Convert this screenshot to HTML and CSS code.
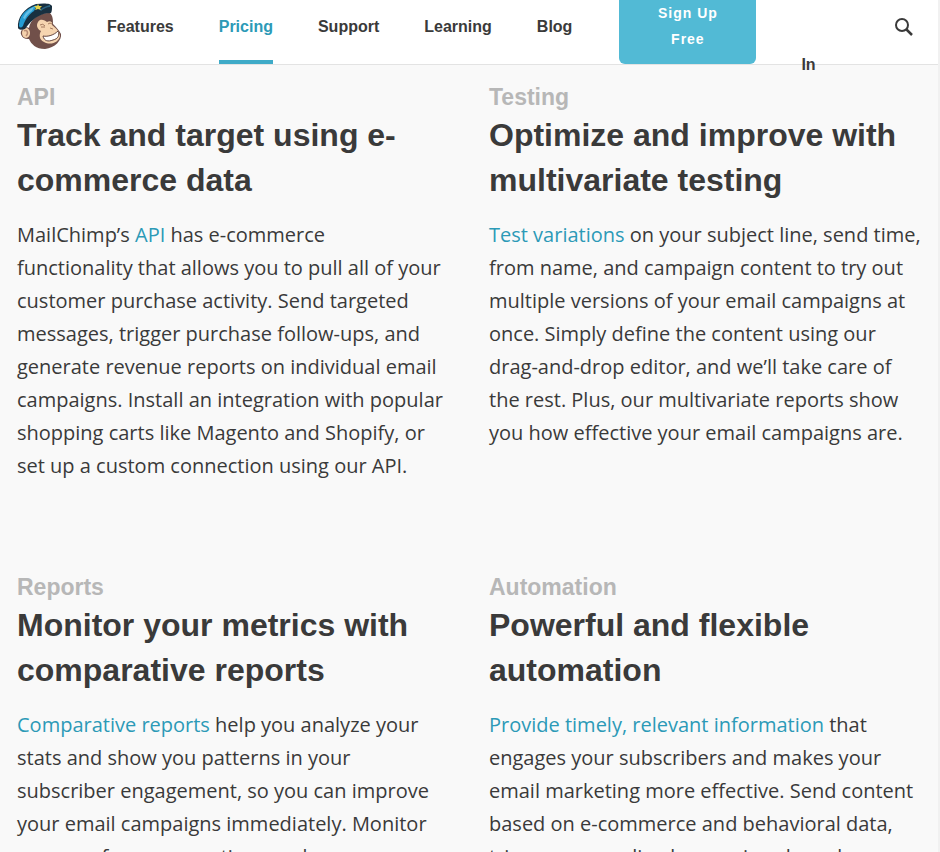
FILE: index.html
```html
<!DOCTYPE html>
<html lang="en">
<head>
  <meta charset="UTF-8">
  <meta name="viewport" content="width=device-width, initial-scale=1.0">
  <title>Pricing | MailChimp</title>
  <link rel="stylesheet" href="styles.css">
</head>
<body>
  <header class="site-header">
    <a href="#" class="logo" aria-label="MailChimp">
      <svg width="46" height="46" viewBox="0 0 46 46">
        <!-- head and ear -->
        <path d="M12 25C13 16 23 9 33 10C36 13 36 17 36 21C39 24 42 27 44 31C45 37 38 45 28 46C19 46 14 41 12 36C5 37 1 29 6 26C8 24 11 24 12 25Z" fill="#71504a"/>
        <ellipse cx="9" cy="30" rx="4" ry="5" fill="#f4d1ac"/>
        <path d="M7 28C10 26 12 30 9 33" fill="none" stroke="#b98c74" stroke-width="1.5"/>
        <!-- face -->
        <path d="M21 19C23 15 28 17 30 19C33 17 36 19 35 22C39 25 43 29 43 33C42 39 34 43 27 39C22 37 22 31 24 28C20 26 19 22 21 19Z" fill="#f6d5b0"/>
        <path d="M26 33C31 34 37 32 41 28C43 32 41 36 36 37C31 39 27 38 26 33Z" fill="#fff" stroke="#65463f"/>
        <path d="M23 22Q26 20 28 23M31 21Q33 19 35 21M24 24L28 24M33 25L36 26" fill="none" stroke="#a4795e"/>
        <!-- cap -->
        <path d="M1 25C0 15 7 5 19 1C26 0 34 0 35 3C35 6 35 8 34 10C23 10 15 16 8 26C4 27 2 27 1 25Z" fill="#183040"/>
        <path d="M2 23C2 13 8 6 20 2L17 8C11 12 8 17 6 23C4 25 3 25 2 23Z" fill="#259dd3"/>
        <path d="M6 15C8 10 12 6 17 4L15 8C11 11 9 13 8 16Z" fill="#65bfe5"/>
        <path d="M23 7C26 4 30 3 33 2L33 4C30 4 26 6 24 8Z" fill="#2c6684"/>
        <path d="M21 1L22 3L25 3L23 5L24 7L21 6L18 7L19 5L17 3L20 3Z" fill="#e5d249"/>
      </svg>
    </a>
    <nav class="main-nav">
      <a href="#">Features</a>
      <a href="#" class="active">Pricing</a>
      <a href="#">Support</a>
      <a href="#">Learning</a>
      <a href="#">Blog</a>
    </nav>
    <a href="#" class="signup">Sign Up Free</a>
    <a href="#" class="login">In</a>
    <button class="search" type="button" aria-label="Search">
      <svg width="20" height="20" viewBox="0 0 20 20" fill="none" stroke="#3a3a3a">
        <circle cx="8" cy="8" r="6" stroke-width="2"/>
        <path d="M12 12L18 18" stroke-width="2.5"/>
      </svg>
    </button>
  </header>

  <main class="features">
    <section class="feature">
      <h3>API</h3>
      <h2>Track and target using e-commerce data</h2>
      <p>MailChimp’s <a href="#">API</a> has e-commerce<br> functionality that allows you to pull all of your customer purchase activity. Send targeted messages, trigger purchase follow-ups, and generate revenue reports on individual email campaigns. Install an integration with popular shopping carts like Magento and Shopify, or set up a custom connection using our API.</p>
    </section>
    <section class="feature">
      <h3>Testing</h3>
      <h2>Optimize and improve with multivariate testing</h2>
      <p><a href="#">Test variations</a> on your subject line, send time, from name, and campaign content to try out multiple versions of your email campaigns at once. Simply define the content using our drag-and-drop editor, and we’ll take care of the rest. Plus, our multivariate reports show you how effective your email campaigns are.</p>
    </section>
    <section class="feature">
      <h3>Reports</h3>
      <h2>Monitor your metrics with comparative reports</h2>
      <p><a href="#">Comparative reports</a> help you analyze your stats and show you patterns in your subscriber engagement, so you can improve your email campaigns immediately. Monitor open performance options and</p>
    </section>
    <section class="feature">
      <h3>Automation</h3>
      <h2>Powerful and flexible automation</h2>
      <p><a href="#">Provide timely, relevant information</a> that engages your subscribers and makes your email marketing more effective. Send content based on e-commerce and behavioral data, trigger personalized campaigns based</p>
    </section>
  </main>
</body>
</html>
```

FILE: styles.css
```css
* {
  margin: 0;
  padding: 0;
  box-sizing: border-box;
}

html {
  height: 100%;
  overflow: hidden;
}

body {
  height: 100vh;
  overflow: hidden;
  font-family: "Open Sans", "Noto Sans", sans-serif;
  color: #3a3a3a;
  background: #f9f9f9;
  border-right: 2px solid #f1f1f1;
}

a {
  color: #2c9ab7;
  text-decoration: none;
}

.site-header {
  display: flex;
  height: 65px;
  padding: 0 24px 0 17px;
  background: #fff;
  border-bottom: 1px solid #e3e3e3;
  font-family: "Liberation Sans", Arial, sans-serif;
  font-size: 16px;
  font-weight: bold;
}

.logo {
  padding-top: 3px;
  margin-right: 44px;
}

.main-nav {
  display: flex;
  gap: 45px;
}

.main-nav a {
  height: 64px;
  line-height: 53px;
  color: #3a3a3a;
}

.main-nav .active {
  color: #2c9ab7;
  border-bottom: 4px solid #3fabc8;
}

.signup {
  width: 137px;
  height: 64px;
  padding: 0 32px;
  margin-left: 47px;
  font-size: 14px;
  line-height: 26px;
  letter-spacing: 1px;
  text-align: center;
  color: #fff;
  background: #52bad5;
  border-radius: 0 0 6px 6px;
}

.login {
  height: 64px;
  padding-top: 38px;
  margin-left: 45px;
  line-height: 53px;
  color: #3a3a3a;
}

.search {
  align-self: flex-start;
  height: 53px;
  margin-left: auto;
  border: none;
  background: none;
  cursor: pointer;
}

.search svg {
  display: block;
}

.features {
  display: grid;
  grid-template-columns: 1fr 1fr;
  gap: 89px 38px;
  padding: 16px 15px 0 17px;
}

h2,
h3 {
  font-family: "Liberation Sans", Arial, sans-serif;
}

h3 {
  font-size: 23px;
  line-height: 32px;
  color: #b7b7b7;
}

h2 {
  margin-bottom: 15px;
  font-size: 32px;
  line-height: 45px;
}

p {
  font-size: 20px;
  line-height: 33px;
}
```
